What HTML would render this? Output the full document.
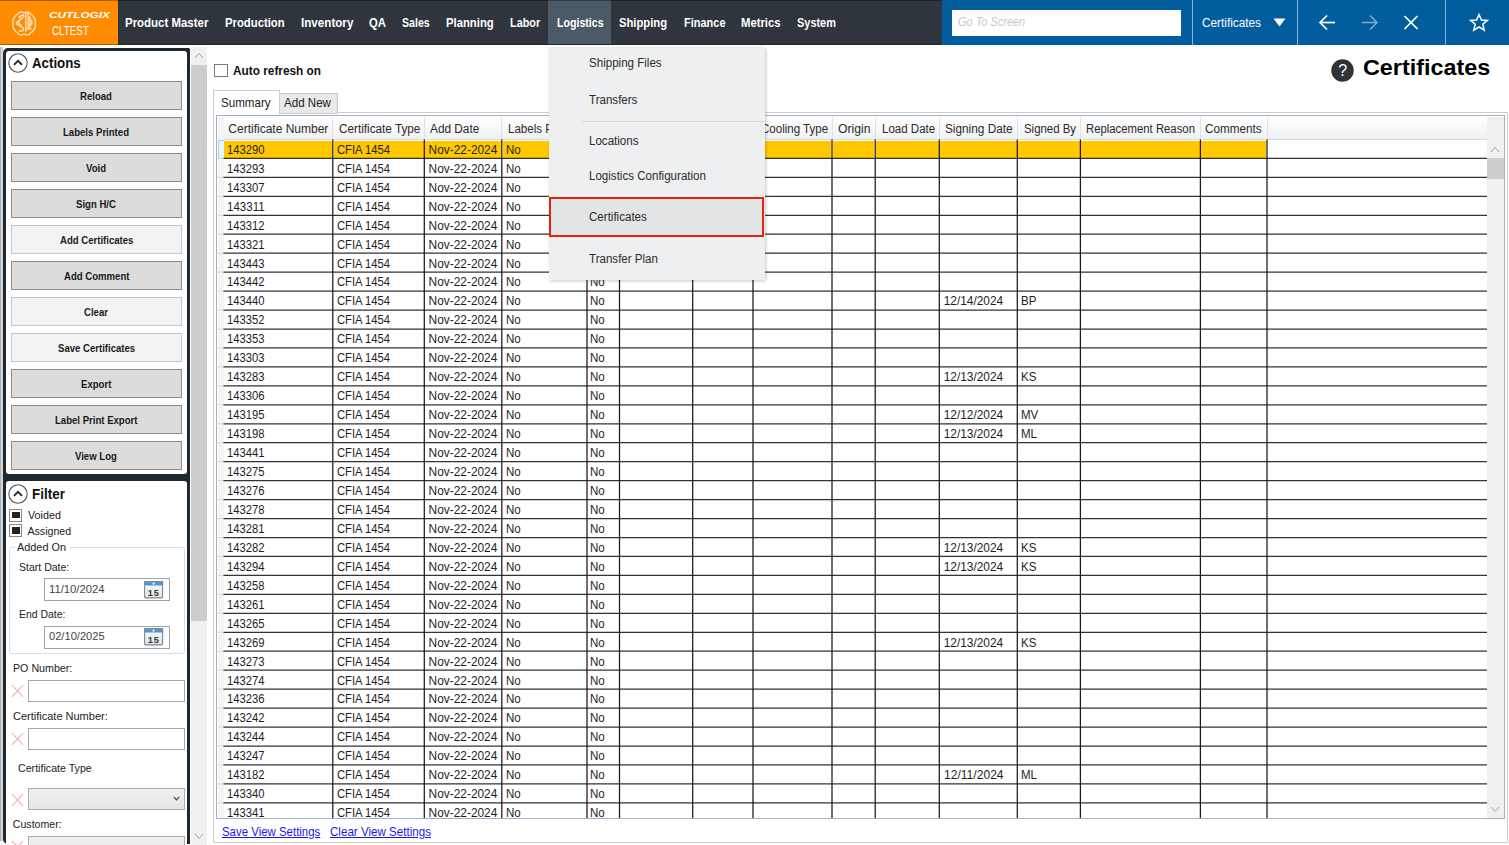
<!DOCTYPE html><html><head><meta charset='utf-8'><style>
*{box-sizing:border-box;margin:0;padding:0}
html,body{width:1509px;height:845px;overflow:hidden;background:#fff;font-family:"Liberation Sans", sans-serif;color:#222}
.a{position:absolute}
.t{position:absolute;white-space:nowrap;line-height:1;transform-origin:0 0}
.btn{position:absolute;left:10.5px;width:171.5px;height:29.5px;background:#dcdcdc;border:1px solid #8c8c8c}
.btn.l{background:#f3f3f3;border-color:#c3c6ca}
</style></head><body>
<div class="a" style="left:0;top:0;width:1509px;height:45px;background:#2e353c"></div>
<div class="a" style="left:0;top:0;width:118px;height:45px;background:#ff8c00"></div>
<div class="a" style="left:548px;top:0;width:63px;height:44px;background:#4a5a66"></div>
<div class="a" style="left:942px;top:0;width:567px;height:45px;background:#015d9e"></div>
<div class="a" style="left:0;top:0;width:942px;height:1px;background:rgba(0,0,0,0.33)"></div>
<div class="a" style="left:0;top:44px;width:942px;height:1px;background:rgba(0,0,0,0.3)"></div>
<svg class="a" style="left:10px;top:10px" width="28" height="27" viewBox="0 0 28 27">
<g fill="none" stroke="#ffd9ad" stroke-linejoin="round" stroke-linecap="round" stroke-width="1.5">
<path d="M9 2.6 Q11.5 1.4 14 2.8 Q16.8 1.4 19.3 2.6 L21 4.5 Q23.2 4.8 23.6 7 L25.3 9.5 V17.5 L23.6 20 Q23.2 22.2 21 22.5 L19.3 24.4 Q16.8 25.6 14 24.2 Q11.5 25.6 9 24.4 L7.3 22.5 Q5.1 22.2 4.7 20 L3 17.5 V9.5 L4.7 7 Q5.1 4.8 7.3 4.5 Z"/>
<path d="M9.3 7 Q11 5.2 13.2 4.8 M13.2 4.8 L14 6.5 L6.6 12.3 L6.6 14.2 L13.4 17.8 L13.4 20.2 Q11.6 21.8 9.6 20.8"/>
<path d="M11.6 8.5 L8.8 11 L8.8 13.6 L11.6 15.6"/>
<path d="M15.8 3.4 V21.4 M18.2 3.4 V19"/>
<path d="M19.8 7.5 V18.8 H21.2 M21.8 10 V14.5 H20.8"/>
</g>
<g fill="#ffe6c8"><circle cx="9.4" cy="7" r="1"/><circle cx="9.6" cy="20.6" r="1"/><circle cx="17" cy="2.9" r="1"/><circle cx="19.8" cy="7.4" r="0.9"/><circle cx="18.4" cy="19" r="0.9"/></g>
</svg>
<div class="t" style="left:49.20px;top:10px;font-size:9.5px;color:#fff;font-weight:bold;font-style:italic;transform:scaleX(1.239);">CUTLOGIX</div>
<div class="t" style="left:52.40px;top:24px;font-size:13px;color:#fff;transform:scaleX(0.755);">CLTEST</div>
<div class="t" style="left:125.30px;top:17px;font-size:12.8px;color:#fff;font-weight:bold;transform:scaleX(0.895);">Product Master</div>
<div class="t" style="left:225.10px;top:17px;font-size:12.8px;color:#fff;font-weight:bold;transform:scaleX(0.883);">Production</div>
<div class="t" style="left:300.80px;top:17px;font-size:12.8px;color:#fff;font-weight:bold;transform:scaleX(0.909);">Inventory</div>
<div class="t" style="left:369.10px;top:17px;font-size:12.8px;color:#fff;font-weight:bold;transform:scaleX(0.883);">QA</div>
<div class="t" style="left:402.10px;top:17px;font-size:12.8px;color:#fff;font-weight:bold;transform:scaleX(0.830);">Sales</div>
<div class="t" style="left:445.70px;top:17px;font-size:12.8px;color:#fff;font-weight:bold;transform:scaleX(0.883);">Planning</div>
<div class="t" style="left:509.70px;top:17px;font-size:12.8px;color:#fff;font-weight:bold;transform:scaleX(0.848);">Labor</div>
<div class="t" style="left:556.60px;top:17px;font-size:12.8px;color:#fff;font-weight:bold;transform:scaleX(0.830);">Logistics</div>
<div class="t" style="left:619.10px;top:17px;font-size:12.8px;color:#fff;font-weight:bold;transform:scaleX(0.879);">Shipping</div>
<div class="t" style="left:683.90px;top:17px;font-size:12.8px;color:#fff;font-weight:bold;transform:scaleX(0.858);">Finance</div>
<div class="t" style="left:741.40px;top:17px;font-size:12.8px;color:#fff;font-weight:bold;transform:scaleX(0.883);">Metrics</div>
<div class="t" style="left:797.10px;top:17px;font-size:12.8px;color:#fff;font-weight:bold;transform:scaleX(0.855);">System</div>
<div class="a" style="left:952px;top:10px;width:229px;height:25.5px;background:#fff"></div>
<div class="t" style="left:957.70px;top:16px;font-size:12.3px;color:#c8c8c8;font-style:italic;transform:scaleX(0.891);">Go To Screen</div>
<div class="a" style="left:1192px;top:0;width:1px;height:45px;background:#8fb3d3"></div>
<div class="a" style="left:1297px;top:0;width:1px;height:45px;background:#8fb3d3"></div>
<div class="a" style="left:1445px;top:0;width:1px;height:45px;background:#8fb3d3"></div>
<div class="t" style="left:1201.80px;top:17px;font-size:12.3px;color:#fff;transform:scaleX(0.959);">Certificates</div>
<svg class="a" style="left:1273px;top:18px" width="13" height="9" viewBox="0 0 13 9"><path d="M0.5 0.5 H12.5 L6.5 8.5 Z" fill="#fff"/></svg>
<svg class="a" style="left:1318px;top:14px" width="20" height="17" viewBox="0 0 20 17"><g fill="none" stroke="#fff" stroke-width="1.7"><path d="M2 8.5 H17"/><path d="M9 1.5 L2 8.5 L9 15.5"/></g></svg>
<svg class="a" style="left:1360px;top:14px" width="20" height="17" viewBox="0 0 20 17"><g fill="none" stroke="#86a9cb" stroke-width="1.5"><path d="M2 8.5 H17"/><path d="M10 1.5 L17 8.5 L10 15.5"/></g></svg>
<svg class="a" style="left:1403px;top:15px" width="16" height="15" viewBox="0 0 16 15"><g fill="none" stroke="#fff" stroke-width="1.7"><path d="M1.5 1 L14.5 14"/><path d="M14.5 1 L1.5 14"/></g></svg>
<svg class="a" style="left:1469px;top:13px" width="20" height="19" viewBox="0 0 20 19"><path d="M10 1.5 L12.4 7 L18.3 7.4 L13.8 11.3 L15.2 17.2 L10 14 L4.8 17.2 L6.2 11.3 L1.7 7.4 L7.6 7 Z" fill="none" stroke="#fff" stroke-width="1.5" stroke-linejoin="miter"/></svg>
<div class="a" style="left:0;top:47px;width:2.8px;height:793.5px;background:linear-gradient(90deg,#aeb2b5 0,#aeb2b5 1.3px,#d6d6d6 1.3px)"></div>
<div class="a" style="left:2.8px;top:47.5px;width:187.6px;height:796px;border-radius:5px 1.5px 0 5px;background:#1e2830"></div>
<div class="a" style="left:5.8px;top:50.6px;width:181.4px;height:423.8px;border-radius:3px;background:#fff"></div>
<div class="a" style="left:5.5px;top:481.1px;width:181.8px;height:380px;border-radius:3px;background:#fff"></div>
<svg class="a" style="left:8px;top:53px" width="20" height="20" viewBox="0 0 20 20"><circle cx="10" cy="10" r="9.2" fill="none" stroke="#555" stroke-width="1.1"/><path d="M6 11.8 L10 7.8 L14 11.8" fill="none" stroke="#222" stroke-width="1.8"/></svg>
<div class="t" style="left:31.70px;top:56px;font-size:14.5px;color:#111;font-weight:bold;transform:scaleX(0.916);">Actions</div>
<div class="btn" style="top:80.5px"></div>
<div class="t" style="left:80.42px;top:92px;font-size:10.2px;color:#1a1a1a;font-weight:bold;transform:scaleX(0.940);">Reload</div>
<div class="btn" style="top:116.5px"></div>
<div class="t" style="left:63.38px;top:128px;font-size:10.2px;color:#1a1a1a;font-weight:bold;transform:scaleX(0.940);">Labels Printed</div>
<div class="btn" style="top:152.5px"></div>
<div class="t" style="left:86.41px;top:164px;font-size:10.2px;color:#1a1a1a;font-weight:bold;transform:scaleX(0.940);">Void</div>
<div class="btn" style="top:188.5px"></div>
<div class="t" style="left:76.43px;top:200px;font-size:10.2px;color:#1a1a1a;font-weight:bold;transform:scaleX(0.940);">Sign H/C</div>
<div class="btn l" style="top:224.5px"></div>
<div class="t" style="left:59.62px;top:236px;font-size:10.2px;color:#1a1a1a;font-weight:bold;transform:scaleX(0.940);">Add Certificates</div>
<div class="btn" style="top:260.5px"></div>
<div class="t" style="left:63.62px;top:272px;font-size:10.2px;color:#1a1a1a;font-weight:bold;transform:scaleX(0.940);">Add Comment</div>
<div class="btn l" style="top:296.5px"></div>
<div class="t" style="left:84.42px;top:308px;font-size:10.2px;color:#1a1a1a;font-weight:bold;transform:scaleX(0.940);">Clear</div>
<div class="btn l" style="top:332.5px"></div>
<div class="t" style="left:57.74px;top:344px;font-size:10.2px;color:#1a1a1a;font-weight:bold;transform:scaleX(0.940);">Save Certificates</div>
<div class="btn" style="top:368.5px"></div>
<div class="t" style="left:81.12px;top:380px;font-size:10.2px;color:#1a1a1a;font-weight:bold;transform:scaleX(0.940);">Export</div>
<div class="btn" style="top:404.5px"></div>
<div class="t" style="left:55.04px;top:416px;font-size:10.2px;color:#1a1a1a;font-weight:bold;transform:scaleX(0.940);">Label Print Export</div>
<div class="btn" style="top:440.5px"></div>
<div class="t" style="left:75.49px;top:452px;font-size:10.2px;color:#1a1a1a;font-weight:bold;transform:scaleX(0.940);">View Log</div>
<svg class="a" style="left:8px;top:483.5px" width="20" height="20" viewBox="0 0 20 20"><circle cx="10" cy="10" r="9.2" fill="none" stroke="#555" stroke-width="1.1"/><path d="M6 11.8 L10 7.8 L14 11.8" fill="none" stroke="#222" stroke-width="1.8"/></svg>
<div class="t" style="left:32.00px;top:487px;font-size:14.5px;color:#111;font-weight:bold;transform:scaleX(0.930);">Filter</div>
<div class="a" style="left:8.8px;top:509px;width:13.5px;height:12.5px;border:1px solid #888;background:#fff"></div>
<div class="a" style="left:11.5px;top:511.8px;width:8px;height:6.7px;background:#222"></div>
<div class="t" style="left:27.50px;top:510px;font-size:10.6px;color:#222;transform:scaleX(1.015);">Voided</div>
<div class="a" style="left:8.8px;top:524.3px;width:13.5px;height:12.5px;border:1px solid #888;background:#fff"></div>
<div class="a" style="left:11.5px;top:527.0999999999999px;width:8px;height:6.7px;background:#222"></div>
<div class="t" style="left:27.50px;top:526px;font-size:10.6px;color:#222;">Assigned</div>
<div class="a" style="left:9px;top:547px;width:175.5px;height:106.5px;border:1px solid #d5dde5;border-radius:3px"></div>
<div class="a" style="left:15px;top:542px;width:55px;height:10px;background:#fff"></div>
<div class="t" style="left:16.60px;top:542px;font-size:10.6px;color:#222;transform:scaleX(1.026);">Added On</div>
<div class="t" style="left:18.50px;top:562px;font-size:10.6px;color:#222;transform:scaleX(0.993);">Start Date:</div>
<div class="t" style="left:18.50px;top:609px;font-size:10.6px;color:#222;transform:scaleX(0.986);">End Date:</div>
<div class="a" style="left:43.5px;top:578px;width:126px;height:23px;border:1px solid #98a6b3;background:#fff"></div>
<div class="t" style="left:49.20px;top:584px;font-size:10.8px;color:#444;transform:scaleX(1.044);">11/10/2024</div>
<svg class="a" style="left:143.6px;top:580.8000000000001px" width="20" height="18" viewBox="0 0 20 18"><defs><linearGradient id="cg" x1="0" y1="0" x2="0" y2="1"><stop offset="0" stop-color="#fdfdfd"/><stop offset="1" stop-color="#dfe2e5"/></linearGradient></defs><path d="M0.6 0.6 H18.6 V15.6 Q18.6 16.9 17.3 16.9 H1.9 Q0.6 16.9 0.6 15.6 Z" fill="url(#cg)" stroke="#858585" stroke-width="1.1"/><rect x="1.1" y="1.1" width="17" height="3.4" fill="#4f93d6"/><circle cx="9.6" cy="2.6" r="1.1" fill="#fff"/><text x="9.7" y="14.6" font-family="Liberation Sans" font-weight="bold" font-size="9.2" letter-spacing="0.9" text-anchor="middle" fill="#3a3a3a">15</text></svg>
<div class="a" style="left:43.5px;top:626px;width:126px;height:23px;border:1px solid #98a6b3;background:#fff"></div>
<div class="t" style="left:49.20px;top:631px;font-size:10.8px;color:#444;transform:scaleX(1.030);">02/10/2025</div>
<svg class="a" style="left:143.6px;top:628.4px" width="20" height="18" viewBox="0 0 20 18"><defs><linearGradient id="cg" x1="0" y1="0" x2="0" y2="1"><stop offset="0" stop-color="#fdfdfd"/><stop offset="1" stop-color="#dfe2e5"/></linearGradient></defs><path d="M0.6 0.6 H18.6 V15.6 Q18.6 16.9 17.3 16.9 H1.9 Q0.6 16.9 0.6 15.6 Z" fill="url(#cg)" stroke="#858585" stroke-width="1.1"/><rect x="1.1" y="1.1" width="17" height="3.4" fill="#4f93d6"/><circle cx="9.6" cy="2.6" r="1.1" fill="#fff"/><text x="9.7" y="14.6" font-family="Liberation Sans" font-weight="bold" font-size="9.2" letter-spacing="0.9" text-anchor="middle" fill="#3a3a3a">15</text></svg>
<div class="t" style="left:12.80px;top:663px;font-size:10.6px;color:#222;transform:scaleX(1.007);">PO Number:</div>
<svg class="a" style="left:10.5px;top:684px" width="13" height="14" viewBox="0 0 13 14"><g stroke="#f8bdb7" stroke-width="1.3"><path d="M1 1 L12 13"/><path d="M12 1 L1 13"/></g></svg>
<div class="a" style="left:27.8px;top:680px;width:157.5px;height:22px;border:1px solid #a6a6a6;background:#fff"></div>
<div class="t" style="left:12.80px;top:711px;font-size:10.6px;color:#222;transform:scaleX(1.038);">Certificate Number:</div>
<svg class="a" style="left:10.5px;top:731.5px" width="13" height="14" viewBox="0 0 13 14"><g stroke="#f8bdb7" stroke-width="1.3"><path d="M1 1 L12 13"/><path d="M12 1 L1 13"/></g></svg>
<div class="a" style="left:27.8px;top:727.5px;width:157.5px;height:22px;border:1px solid #a6a6a6;background:#fff"></div>
<div class="t" style="left:17.80px;top:763px;font-size:10.6px;color:#222;transform:scaleX(1.005);">Certificate Type</div>
<svg class="a" style="left:10.5px;top:792.5px" width="13" height="14" viewBox="0 0 13 14"><g stroke="#f8bdb7" stroke-width="1.3"><path d="M1 1 L12 13"/><path d="M12 1 L1 13"/></g></svg>
<div class="a" style="left:27.8px;top:787.5px;width:157.5px;height:22.5px;border:1px solid #acacac;background:linear-gradient(#f0f0f0,#e5e5e5)"></div>
<svg class="a" style="left:172.5px;top:796px" width="7" height="5" viewBox="0 0 7 5"><path d="M0.7 0.8 L3.5 3.8 L6.3 0.8" fill="none" stroke="#444" stroke-width="1.2"/></svg>
<div class="t" style="left:12.80px;top:819px;font-size:10.6px;color:#222;">Customer:</div>
<svg class="a" style="left:10.5px;top:840px" width="13" height="14" viewBox="0 0 13 14"><g stroke="#f8bdb7" stroke-width="1.3"><path d="M1 1 L12 13"/><path d="M12 1 L1 13"/></g></svg>
<div class="a" style="left:27.8px;top:835.5px;width:157.5px;height:22.5px;border:1px solid #acacac;background:linear-gradient(#f0f0f0,#e5e5e5)"></div>
<div class="a" style="left:190.5px;top:47px;width:16.5px;height:798px;background:#f0f0f0"></div>
<div class="a" style="left:190.5px;top:64.5px;width:16.5px;height:556.5px;background:#cdcdcd"></div>
<svg class="a" style="left:194px;top:52px" width="10" height="7" viewBox="0 0 10 7"><path d="M1 6 L5 1.5 L9 6" fill="none" stroke="#a0a0a0" stroke-width="1"/></svg>
<svg class="a" style="left:194px;top:833px" width="10" height="7" viewBox="0 0 10 7"><path d="M1 1 L5 5.5 L9 1" fill="none" stroke="#a0a0a0" stroke-width="1"/></svg>
<div class="a" style="left:214px;top:63.5px;width:14px;height:13px;border:1px solid #7a7a7a;background:#fff"></div>
<div class="t" style="left:233.30px;top:65px;font-size:12.2px;color:#111;font-weight:bold;transform:scaleX(0.970);">Auto refresh on</div>
<svg class="a" style="left:1331px;top:58.5px" width="23" height="23" viewBox="0 0 23 23"><circle cx="11.5" cy="11.5" r="11.2" fill="#2f3439"/><text x="11.6" y="17.3" font-family="Liberation Sans" font-size="16" text-anchor="middle" fill="#fff">?</text></svg>
<div class="t" style="left:1362.70px;top:57px;font-size:21.8px;color:#000;font-weight:bold;transform:scaleX(1.072);">Certificates</div>
<div class="a" style="left:213px;top:112px;width:1295px;height:731px;border:1px solid #cdcdcd;background:#fff"></div>
<div class="a" style="left:279px;top:92.5px;width:59px;height:21px;border:1px solid #c9c9c9;background:#e9e9e9"></div>
<div class="a" style="left:213px;top:90px;width:66.5px;height:23px;border:1px solid #cdcdcd;border-bottom:none;background:#fff"></div>
<div class="t" style="left:221.20px;top:97px;font-size:12.2px;color:#222;transform:scaleX(0.950);">Summary</div>
<div class="t" style="left:283.50px;top:97px;font-size:12.2px;color:#222;transform:scaleX(0.950);">Add New</div>
<div class="a" style="left:216px;top:115px;width:1289px;height:704px;border:1px solid #9db1c9;background:#fff"></div>
<div class="a" style="left:217.5px;top:116.5px;width:1269px;height:23px;background:linear-gradient(#ffffff,#f0f1f3);border-bottom:1px solid #d9d9d9"></div>
<div class="a" style="left:217.5px;top:116.5px;width:6px;height:701px;background:#f4f4f4"></div>
<div class="a" style="left:332.3px;top:117px;width:1px;height:22px;background:#e2e2e2"></div>
<div class="a" style="left:423.8px;top:117px;width:1px;height:22px;background:#e2e2e2"></div>
<div class="a" style="left:501.3px;top:117px;width:1px;height:22px;background:#e2e2e2"></div>
<div class="a" style="left:586.5px;top:117px;width:1px;height:22px;background:#e2e2e2"></div>
<div class="a" style="left:619.0px;top:117px;width:1px;height:22px;background:#e2e2e2"></div>
<div class="a" style="left:692.2px;top:117px;width:1px;height:22px;background:#e2e2e2"></div>
<div class="a" style="left:752.5px;top:117px;width:1px;height:22px;background:#e2e2e2"></div>
<div class="a" style="left:831.5px;top:117px;width:1px;height:22px;background:#e2e2e2"></div>
<div class="a" style="left:874.7px;top:117px;width:1px;height:22px;background:#e2e2e2"></div>
<div class="a" style="left:938.8px;top:117px;width:1px;height:22px;background:#e2e2e2"></div>
<div class="a" style="left:1016.8px;top:117px;width:1px;height:22px;background:#e2e2e2"></div>
<div class="a" style="left:1079.9px;top:117px;width:1px;height:22px;background:#e2e2e2"></div>
<div class="a" style="left:1199.9px;top:117px;width:1px;height:22px;background:#e2e2e2"></div>
<div class="a" style="left:1266.5px;top:117px;width:1px;height:22px;background:#e2e2e2"></div>
<div class="t" style="left:228.30px;top:123px;font-size:12px;color:#2a2a2a;">Certificate Number</div>
<div class="t" style="left:338.70px;top:123px;font-size:12px;color:#2a2a2a;transform:scaleX(0.978);">Certificate Type</div>
<div class="t" style="left:430.30px;top:123px;font-size:12px;color:#2a2a2a;transform:scaleX(0.984);">Add Date</div>
<div class="t" style="left:507.70px;top:123px;font-size:12px;color:#2a2a2a;transform:scaleX(0.960);">Labels Printed</div>
<div class="t" style="left:760.87px;top:123px;font-size:12px;color:#2a2a2a;transform:scaleX(0.961);">Cooling Type</div>
<div class="t" style="left:838.10px;top:123px;font-size:12px;color:#2a2a2a;transform:scaleX(1.019);">Origin</div>
<div class="t" style="left:881.60px;top:123px;font-size:12px;color:#2a2a2a;transform:scaleX(0.960);">Load Date</div>
<div class="t" style="left:945.20px;top:123px;font-size:12px;color:#2a2a2a;transform:scaleX(0.983);">Signing Date</div>
<div class="t" style="left:1023.50px;top:123px;font-size:12px;color:#2a2a2a;transform:scaleX(0.950);">Signed By</div>
<div class="t" style="left:1085.90px;top:123px;font-size:12px;color:#2a2a2a;transform:scaleX(0.944);">Replacement Reason</div>
<div class="t" style="left:1205.40px;top:123px;font-size:12px;color:#2a2a2a;transform:scaleX(0.976);">Comments</div>
<div class="a" style="left:224.2px;top:141px;width:107.9px;height:16.8px;background:#ffc800"></div>
<div class="a" style="left:333.5px;top:141px;width:90.1px;height:16.8px;background:#ffc800"></div>
<div class="a" style="left:425.0px;top:141px;width:76.1px;height:16.8px;background:#ffc800"></div>
<div class="a" style="left:502.5px;top:141px;width:83.79999999999998px;height:16.8px;background:#ffc800"></div>
<div class="a" style="left:587.7px;top:141px;width:31.1px;height:16.8px;background:#ffc800"></div>
<div class="a" style="left:620.2px;top:141px;width:71.80000000000004px;height:16.8px;background:#ffc800"></div>
<div class="a" style="left:693.4000000000001px;top:141px;width:58.899999999999956px;height:16.8px;background:#ffc800"></div>
<div class="a" style="left:753.7px;top:141px;width:77.6px;height:16.8px;background:#ffc800"></div>
<div class="a" style="left:832.7px;top:141px;width:41.80000000000005px;height:16.8px;background:#ffc800"></div>
<div class="a" style="left:875.9000000000001px;top:141px;width:62.69999999999991px;height:16.8px;background:#ffc800"></div>
<div class="a" style="left:940.0px;top:141px;width:76.6px;height:16.8px;background:#ffc800"></div>
<div class="a" style="left:1018.0px;top:141px;width:61.70000000000014px;height:16.8px;background:#ffc800"></div>
<div class="a" style="left:1081.1000000000001px;top:141px;width:118.6px;height:16.8px;background:#ffc800"></div>
<div class="a" style="left:1201.1000000000001px;top:141px;width:65.1999999999999px;height:16.8px;background:#ffc800"></div>
<div class="a" style="left:217.5px;top:140px;width:6px;height:18.5px;border:1px solid #9fd3f5;border-right:none;background:#e8f4fc"></div>
<div class="t" style="left:226.80px;top:145px;font-size:11.9px;color:#1e1e1e;transform:scaleX(0.946);">143290</div>
<div class="t" style="left:336.50px;top:145px;font-size:11.9px;color:#1e1e1e;transform:scaleX(0.942);">CFIA 1454</div>
<div class="t" style="left:428.60px;top:145px;font-size:11.9px;color:#1e1e1e;">Nov-22-2024</div>
<div class="t" style="left:506.00px;top:145px;font-size:11.9px;color:#1e1e1e;transform:scaleX(0.970);">No</div>
<div class="t" style="left:590.30px;top:145px;font-size:11.9px;color:#1e1e1e;transform:scaleX(0.970);">No</div>
<div class="t" style="left:226.80px;top:164px;font-size:11.9px;color:#1e1e1e;transform:scaleX(0.946);">143293</div>
<div class="t" style="left:336.50px;top:164px;font-size:11.9px;color:#1e1e1e;transform:scaleX(0.942);">CFIA 1454</div>
<div class="t" style="left:428.60px;top:164px;font-size:11.9px;color:#1e1e1e;">Nov-22-2024</div>
<div class="t" style="left:506.00px;top:164px;font-size:11.9px;color:#1e1e1e;transform:scaleX(0.970);">No</div>
<div class="t" style="left:590.30px;top:164px;font-size:11.9px;color:#1e1e1e;transform:scaleX(0.970);">No</div>
<div class="t" style="left:226.80px;top:183px;font-size:11.9px;color:#1e1e1e;transform:scaleX(0.946);">143307</div>
<div class="t" style="left:336.50px;top:183px;font-size:11.9px;color:#1e1e1e;transform:scaleX(0.942);">CFIA 1454</div>
<div class="t" style="left:428.60px;top:183px;font-size:11.9px;color:#1e1e1e;">Nov-22-2024</div>
<div class="t" style="left:506.00px;top:183px;font-size:11.9px;color:#1e1e1e;transform:scaleX(0.970);">No</div>
<div class="t" style="left:590.30px;top:183px;font-size:11.9px;color:#1e1e1e;transform:scaleX(0.970);">No</div>
<div class="t" style="left:226.80px;top:202px;font-size:11.9px;color:#1e1e1e;transform:scaleX(0.970);">143311</div>
<div class="t" style="left:336.50px;top:202px;font-size:11.9px;color:#1e1e1e;transform:scaleX(0.942);">CFIA 1454</div>
<div class="t" style="left:428.60px;top:202px;font-size:11.9px;color:#1e1e1e;">Nov-22-2024</div>
<div class="t" style="left:506.00px;top:202px;font-size:11.9px;color:#1e1e1e;transform:scaleX(0.970);">No</div>
<div class="t" style="left:590.30px;top:202px;font-size:11.9px;color:#1e1e1e;transform:scaleX(0.970);">No</div>
<div class="t" style="left:226.80px;top:221px;font-size:11.9px;color:#1e1e1e;transform:scaleX(0.946);">143312</div>
<div class="t" style="left:336.50px;top:221px;font-size:11.9px;color:#1e1e1e;transform:scaleX(0.942);">CFIA 1454</div>
<div class="t" style="left:428.60px;top:221px;font-size:11.9px;color:#1e1e1e;">Nov-22-2024</div>
<div class="t" style="left:506.00px;top:221px;font-size:11.9px;color:#1e1e1e;transform:scaleX(0.970);">No</div>
<div class="t" style="left:590.30px;top:221px;font-size:11.9px;color:#1e1e1e;transform:scaleX(0.970);">No</div>
<div class="t" style="left:226.80px;top:240px;font-size:11.9px;color:#1e1e1e;transform:scaleX(0.946);">143321</div>
<div class="t" style="left:336.50px;top:240px;font-size:11.9px;color:#1e1e1e;transform:scaleX(0.942);">CFIA 1454</div>
<div class="t" style="left:428.60px;top:240px;font-size:11.9px;color:#1e1e1e;">Nov-22-2024</div>
<div class="t" style="left:506.00px;top:240px;font-size:11.9px;color:#1e1e1e;transform:scaleX(0.970);">No</div>
<div class="t" style="left:590.30px;top:240px;font-size:11.9px;color:#1e1e1e;transform:scaleX(0.970);">No</div>
<div class="t" style="left:226.80px;top:259px;font-size:11.9px;color:#1e1e1e;transform:scaleX(0.946);">143443</div>
<div class="t" style="left:336.50px;top:259px;font-size:11.9px;color:#1e1e1e;transform:scaleX(0.942);">CFIA 1454</div>
<div class="t" style="left:428.60px;top:259px;font-size:11.9px;color:#1e1e1e;">Nov-22-2024</div>
<div class="t" style="left:506.00px;top:259px;font-size:11.9px;color:#1e1e1e;transform:scaleX(0.970);">No</div>
<div class="t" style="left:590.30px;top:259px;font-size:11.9px;color:#1e1e1e;transform:scaleX(0.970);">No</div>
<div class="t" style="left:226.80px;top:277px;font-size:11.9px;color:#1e1e1e;transform:scaleX(0.946);">143442</div>
<div class="t" style="left:336.50px;top:277px;font-size:11.9px;color:#1e1e1e;transform:scaleX(0.942);">CFIA 1454</div>
<div class="t" style="left:428.60px;top:277px;font-size:11.9px;color:#1e1e1e;">Nov-22-2024</div>
<div class="t" style="left:506.00px;top:277px;font-size:11.9px;color:#1e1e1e;transform:scaleX(0.970);">No</div>
<div class="t" style="left:590.30px;top:277px;font-size:11.9px;color:#1e1e1e;transform:scaleX(0.970);">No</div>
<div class="t" style="left:226.80px;top:296px;font-size:11.9px;color:#1e1e1e;transform:scaleX(0.946);">143440</div>
<div class="t" style="left:336.50px;top:296px;font-size:11.9px;color:#1e1e1e;transform:scaleX(0.942);">CFIA 1454</div>
<div class="t" style="left:428.60px;top:296px;font-size:11.9px;color:#1e1e1e;">Nov-22-2024</div>
<div class="t" style="left:506.00px;top:296px;font-size:11.9px;color:#1e1e1e;transform:scaleX(0.970);">No</div>
<div class="t" style="left:590.30px;top:296px;font-size:11.9px;color:#1e1e1e;transform:scaleX(0.970);">No</div>
<div class="t" style="left:943.70px;top:296px;font-size:11.9px;color:#1e1e1e;">12/14/2024</div>
<div class="t" style="left:1020.60px;top:296px;font-size:11.9px;color:#1e1e1e;transform:scaleX(0.970);">BP</div>
<div class="t" style="left:226.80px;top:315px;font-size:11.9px;color:#1e1e1e;transform:scaleX(0.946);">143352</div>
<div class="t" style="left:336.50px;top:315px;font-size:11.9px;color:#1e1e1e;transform:scaleX(0.942);">CFIA 1454</div>
<div class="t" style="left:428.60px;top:315px;font-size:11.9px;color:#1e1e1e;">Nov-22-2024</div>
<div class="t" style="left:506.00px;top:315px;font-size:11.9px;color:#1e1e1e;transform:scaleX(0.970);">No</div>
<div class="t" style="left:590.30px;top:315px;font-size:11.9px;color:#1e1e1e;transform:scaleX(0.970);">No</div>
<div class="t" style="left:226.80px;top:334px;font-size:11.9px;color:#1e1e1e;transform:scaleX(0.946);">143353</div>
<div class="t" style="left:336.50px;top:334px;font-size:11.9px;color:#1e1e1e;transform:scaleX(0.942);">CFIA 1454</div>
<div class="t" style="left:428.60px;top:334px;font-size:11.9px;color:#1e1e1e;">Nov-22-2024</div>
<div class="t" style="left:506.00px;top:334px;font-size:11.9px;color:#1e1e1e;transform:scaleX(0.970);">No</div>
<div class="t" style="left:590.30px;top:334px;font-size:11.9px;color:#1e1e1e;transform:scaleX(0.970);">No</div>
<div class="t" style="left:226.80px;top:353px;font-size:11.9px;color:#1e1e1e;transform:scaleX(0.946);">143303</div>
<div class="t" style="left:336.50px;top:353px;font-size:11.9px;color:#1e1e1e;transform:scaleX(0.942);">CFIA 1454</div>
<div class="t" style="left:428.60px;top:353px;font-size:11.9px;color:#1e1e1e;">Nov-22-2024</div>
<div class="t" style="left:506.00px;top:353px;font-size:11.9px;color:#1e1e1e;transform:scaleX(0.970);">No</div>
<div class="t" style="left:590.30px;top:353px;font-size:11.9px;color:#1e1e1e;transform:scaleX(0.970);">No</div>
<div class="t" style="left:226.80px;top:372px;font-size:11.9px;color:#1e1e1e;transform:scaleX(0.946);">143283</div>
<div class="t" style="left:336.50px;top:372px;font-size:11.9px;color:#1e1e1e;transform:scaleX(0.942);">CFIA 1454</div>
<div class="t" style="left:428.60px;top:372px;font-size:11.9px;color:#1e1e1e;">Nov-22-2024</div>
<div class="t" style="left:506.00px;top:372px;font-size:11.9px;color:#1e1e1e;transform:scaleX(0.970);">No</div>
<div class="t" style="left:590.30px;top:372px;font-size:11.9px;color:#1e1e1e;transform:scaleX(0.970);">No</div>
<div class="t" style="left:943.70px;top:372px;font-size:11.9px;color:#1e1e1e;">12/13/2024</div>
<div class="t" style="left:1020.60px;top:372px;font-size:11.9px;color:#1e1e1e;transform:scaleX(0.970);">KS</div>
<div class="t" style="left:226.80px;top:391px;font-size:11.9px;color:#1e1e1e;transform:scaleX(0.946);">143306</div>
<div class="t" style="left:336.50px;top:391px;font-size:11.9px;color:#1e1e1e;transform:scaleX(0.942);">CFIA 1454</div>
<div class="t" style="left:428.60px;top:391px;font-size:11.9px;color:#1e1e1e;">Nov-22-2024</div>
<div class="t" style="left:506.00px;top:391px;font-size:11.9px;color:#1e1e1e;transform:scaleX(0.970);">No</div>
<div class="t" style="left:590.30px;top:391px;font-size:11.9px;color:#1e1e1e;transform:scaleX(0.970);">No</div>
<div class="t" style="left:226.80px;top:410px;font-size:11.9px;color:#1e1e1e;transform:scaleX(0.946);">143195</div>
<div class="t" style="left:336.50px;top:410px;font-size:11.9px;color:#1e1e1e;transform:scaleX(0.942);">CFIA 1454</div>
<div class="t" style="left:428.60px;top:410px;font-size:11.9px;color:#1e1e1e;">Nov-22-2024</div>
<div class="t" style="left:506.00px;top:410px;font-size:11.9px;color:#1e1e1e;transform:scaleX(0.970);">No</div>
<div class="t" style="left:590.30px;top:410px;font-size:11.9px;color:#1e1e1e;transform:scaleX(0.970);">No</div>
<div class="t" style="left:943.70px;top:410px;font-size:11.9px;color:#1e1e1e;">12/12/2024</div>
<div class="t" style="left:1020.60px;top:410px;font-size:11.9px;color:#1e1e1e;transform:scaleX(0.970);">MV</div>
<div class="t" style="left:226.80px;top:429px;font-size:11.9px;color:#1e1e1e;transform:scaleX(0.946);">143198</div>
<div class="t" style="left:336.50px;top:429px;font-size:11.9px;color:#1e1e1e;transform:scaleX(0.942);">CFIA 1454</div>
<div class="t" style="left:428.60px;top:429px;font-size:11.9px;color:#1e1e1e;">Nov-22-2024</div>
<div class="t" style="left:506.00px;top:429px;font-size:11.9px;color:#1e1e1e;transform:scaleX(0.970);">No</div>
<div class="t" style="left:590.30px;top:429px;font-size:11.9px;color:#1e1e1e;transform:scaleX(0.970);">No</div>
<div class="t" style="left:943.70px;top:429px;font-size:11.9px;color:#1e1e1e;">12/13/2024</div>
<div class="t" style="left:1020.60px;top:429px;font-size:11.9px;color:#1e1e1e;transform:scaleX(0.970);">ML</div>
<div class="t" style="left:226.80px;top:448px;font-size:11.9px;color:#1e1e1e;transform:scaleX(0.946);">143441</div>
<div class="t" style="left:336.50px;top:448px;font-size:11.9px;color:#1e1e1e;transform:scaleX(0.942);">CFIA 1454</div>
<div class="t" style="left:428.60px;top:448px;font-size:11.9px;color:#1e1e1e;">Nov-22-2024</div>
<div class="t" style="left:506.00px;top:448px;font-size:11.9px;color:#1e1e1e;transform:scaleX(0.970);">No</div>
<div class="t" style="left:590.30px;top:448px;font-size:11.9px;color:#1e1e1e;transform:scaleX(0.970);">No</div>
<div class="t" style="left:226.80px;top:467px;font-size:11.9px;color:#1e1e1e;transform:scaleX(0.946);">143275</div>
<div class="t" style="left:336.50px;top:467px;font-size:11.9px;color:#1e1e1e;transform:scaleX(0.942);">CFIA 1454</div>
<div class="t" style="left:428.60px;top:467px;font-size:11.9px;color:#1e1e1e;">Nov-22-2024</div>
<div class="t" style="left:506.00px;top:467px;font-size:11.9px;color:#1e1e1e;transform:scaleX(0.970);">No</div>
<div class="t" style="left:590.30px;top:467px;font-size:11.9px;color:#1e1e1e;transform:scaleX(0.970);">No</div>
<div class="t" style="left:226.80px;top:486px;font-size:11.9px;color:#1e1e1e;transform:scaleX(0.946);">143276</div>
<div class="t" style="left:336.50px;top:486px;font-size:11.9px;color:#1e1e1e;transform:scaleX(0.942);">CFIA 1454</div>
<div class="t" style="left:428.60px;top:486px;font-size:11.9px;color:#1e1e1e;">Nov-22-2024</div>
<div class="t" style="left:506.00px;top:486px;font-size:11.9px;color:#1e1e1e;transform:scaleX(0.970);">No</div>
<div class="t" style="left:590.30px;top:486px;font-size:11.9px;color:#1e1e1e;transform:scaleX(0.970);">No</div>
<div class="t" style="left:226.80px;top:505px;font-size:11.9px;color:#1e1e1e;transform:scaleX(0.946);">143278</div>
<div class="t" style="left:336.50px;top:505px;font-size:11.9px;color:#1e1e1e;transform:scaleX(0.942);">CFIA 1454</div>
<div class="t" style="left:428.60px;top:505px;font-size:11.9px;color:#1e1e1e;">Nov-22-2024</div>
<div class="t" style="left:506.00px;top:505px;font-size:11.9px;color:#1e1e1e;transform:scaleX(0.970);">No</div>
<div class="t" style="left:590.30px;top:505px;font-size:11.9px;color:#1e1e1e;transform:scaleX(0.970);">No</div>
<div class="t" style="left:226.80px;top:524px;font-size:11.9px;color:#1e1e1e;transform:scaleX(0.946);">143281</div>
<div class="t" style="left:336.50px;top:524px;font-size:11.9px;color:#1e1e1e;transform:scaleX(0.942);">CFIA 1454</div>
<div class="t" style="left:428.60px;top:524px;font-size:11.9px;color:#1e1e1e;">Nov-22-2024</div>
<div class="t" style="left:506.00px;top:524px;font-size:11.9px;color:#1e1e1e;transform:scaleX(0.970);">No</div>
<div class="t" style="left:590.30px;top:524px;font-size:11.9px;color:#1e1e1e;transform:scaleX(0.970);">No</div>
<div class="t" style="left:226.80px;top:543px;font-size:11.9px;color:#1e1e1e;transform:scaleX(0.946);">143282</div>
<div class="t" style="left:336.50px;top:543px;font-size:11.9px;color:#1e1e1e;transform:scaleX(0.942);">CFIA 1454</div>
<div class="t" style="left:428.60px;top:543px;font-size:11.9px;color:#1e1e1e;">Nov-22-2024</div>
<div class="t" style="left:506.00px;top:543px;font-size:11.9px;color:#1e1e1e;transform:scaleX(0.970);">No</div>
<div class="t" style="left:590.30px;top:543px;font-size:11.9px;color:#1e1e1e;transform:scaleX(0.970);">No</div>
<div class="t" style="left:943.70px;top:543px;font-size:11.9px;color:#1e1e1e;">12/13/2024</div>
<div class="t" style="left:1020.60px;top:543px;font-size:11.9px;color:#1e1e1e;transform:scaleX(0.970);">KS</div>
<div class="t" style="left:226.80px;top:562px;font-size:11.9px;color:#1e1e1e;transform:scaleX(0.946);">143294</div>
<div class="t" style="left:336.50px;top:562px;font-size:11.9px;color:#1e1e1e;transform:scaleX(0.942);">CFIA 1454</div>
<div class="t" style="left:428.60px;top:562px;font-size:11.9px;color:#1e1e1e;">Nov-22-2024</div>
<div class="t" style="left:506.00px;top:562px;font-size:11.9px;color:#1e1e1e;transform:scaleX(0.970);">No</div>
<div class="t" style="left:590.30px;top:562px;font-size:11.9px;color:#1e1e1e;transform:scaleX(0.970);">No</div>
<div class="t" style="left:943.70px;top:562px;font-size:11.9px;color:#1e1e1e;">12/13/2024</div>
<div class="t" style="left:1020.60px;top:562px;font-size:11.9px;color:#1e1e1e;transform:scaleX(0.970);">KS</div>
<div class="t" style="left:226.80px;top:581px;font-size:11.9px;color:#1e1e1e;transform:scaleX(0.946);">143258</div>
<div class="t" style="left:336.50px;top:581px;font-size:11.9px;color:#1e1e1e;transform:scaleX(0.942);">CFIA 1454</div>
<div class="t" style="left:428.60px;top:581px;font-size:11.9px;color:#1e1e1e;">Nov-22-2024</div>
<div class="t" style="left:506.00px;top:581px;font-size:11.9px;color:#1e1e1e;transform:scaleX(0.970);">No</div>
<div class="t" style="left:590.30px;top:581px;font-size:11.9px;color:#1e1e1e;transform:scaleX(0.970);">No</div>
<div class="t" style="left:226.80px;top:600px;font-size:11.9px;color:#1e1e1e;transform:scaleX(0.946);">143261</div>
<div class="t" style="left:336.50px;top:600px;font-size:11.9px;color:#1e1e1e;transform:scaleX(0.942);">CFIA 1454</div>
<div class="t" style="left:428.60px;top:600px;font-size:11.9px;color:#1e1e1e;">Nov-22-2024</div>
<div class="t" style="left:506.00px;top:600px;font-size:11.9px;color:#1e1e1e;transform:scaleX(0.970);">No</div>
<div class="t" style="left:590.30px;top:600px;font-size:11.9px;color:#1e1e1e;transform:scaleX(0.970);">No</div>
<div class="t" style="left:226.80px;top:619px;font-size:11.9px;color:#1e1e1e;transform:scaleX(0.946);">143265</div>
<div class="t" style="left:336.50px;top:619px;font-size:11.9px;color:#1e1e1e;transform:scaleX(0.942);">CFIA 1454</div>
<div class="t" style="left:428.60px;top:619px;font-size:11.9px;color:#1e1e1e;">Nov-22-2024</div>
<div class="t" style="left:506.00px;top:619px;font-size:11.9px;color:#1e1e1e;transform:scaleX(0.970);">No</div>
<div class="t" style="left:590.30px;top:619px;font-size:11.9px;color:#1e1e1e;transform:scaleX(0.970);">No</div>
<div class="t" style="left:226.80px;top:638px;font-size:11.9px;color:#1e1e1e;transform:scaleX(0.946);">143269</div>
<div class="t" style="left:336.50px;top:638px;font-size:11.9px;color:#1e1e1e;transform:scaleX(0.942);">CFIA 1454</div>
<div class="t" style="left:428.60px;top:638px;font-size:11.9px;color:#1e1e1e;">Nov-22-2024</div>
<div class="t" style="left:506.00px;top:638px;font-size:11.9px;color:#1e1e1e;transform:scaleX(0.970);">No</div>
<div class="t" style="left:590.30px;top:638px;font-size:11.9px;color:#1e1e1e;transform:scaleX(0.970);">No</div>
<div class="t" style="left:943.70px;top:638px;font-size:11.9px;color:#1e1e1e;">12/13/2024</div>
<div class="t" style="left:1020.60px;top:638px;font-size:11.9px;color:#1e1e1e;transform:scaleX(0.970);">KS</div>
<div class="t" style="left:226.80px;top:657px;font-size:11.9px;color:#1e1e1e;transform:scaleX(0.946);">143273</div>
<div class="t" style="left:336.50px;top:657px;font-size:11.9px;color:#1e1e1e;transform:scaleX(0.942);">CFIA 1454</div>
<div class="t" style="left:428.60px;top:657px;font-size:11.9px;color:#1e1e1e;">Nov-22-2024</div>
<div class="t" style="left:506.00px;top:657px;font-size:11.9px;color:#1e1e1e;transform:scaleX(0.970);">No</div>
<div class="t" style="left:590.30px;top:657px;font-size:11.9px;color:#1e1e1e;transform:scaleX(0.970);">No</div>
<div class="t" style="left:226.80px;top:676px;font-size:11.9px;color:#1e1e1e;transform:scaleX(0.946);">143274</div>
<div class="t" style="left:336.50px;top:676px;font-size:11.9px;color:#1e1e1e;transform:scaleX(0.942);">CFIA 1454</div>
<div class="t" style="left:428.60px;top:676px;font-size:11.9px;color:#1e1e1e;">Nov-22-2024</div>
<div class="t" style="left:506.00px;top:676px;font-size:11.9px;color:#1e1e1e;transform:scaleX(0.970);">No</div>
<div class="t" style="left:590.30px;top:676px;font-size:11.9px;color:#1e1e1e;transform:scaleX(0.970);">No</div>
<div class="t" style="left:226.80px;top:694px;font-size:11.9px;color:#1e1e1e;transform:scaleX(0.946);">143236</div>
<div class="t" style="left:336.50px;top:694px;font-size:11.9px;color:#1e1e1e;transform:scaleX(0.942);">CFIA 1454</div>
<div class="t" style="left:428.60px;top:694px;font-size:11.9px;color:#1e1e1e;">Nov-22-2024</div>
<div class="t" style="left:506.00px;top:694px;font-size:11.9px;color:#1e1e1e;transform:scaleX(0.970);">No</div>
<div class="t" style="left:590.30px;top:694px;font-size:11.9px;color:#1e1e1e;transform:scaleX(0.970);">No</div>
<div class="t" style="left:226.80px;top:713px;font-size:11.9px;color:#1e1e1e;transform:scaleX(0.946);">143242</div>
<div class="t" style="left:336.50px;top:713px;font-size:11.9px;color:#1e1e1e;transform:scaleX(0.942);">CFIA 1454</div>
<div class="t" style="left:428.60px;top:713px;font-size:11.9px;color:#1e1e1e;">Nov-22-2024</div>
<div class="t" style="left:506.00px;top:713px;font-size:11.9px;color:#1e1e1e;transform:scaleX(0.970);">No</div>
<div class="t" style="left:590.30px;top:713px;font-size:11.9px;color:#1e1e1e;transform:scaleX(0.970);">No</div>
<div class="t" style="left:226.80px;top:732px;font-size:11.9px;color:#1e1e1e;transform:scaleX(0.946);">143244</div>
<div class="t" style="left:336.50px;top:732px;font-size:11.9px;color:#1e1e1e;transform:scaleX(0.942);">CFIA 1454</div>
<div class="t" style="left:428.60px;top:732px;font-size:11.9px;color:#1e1e1e;">Nov-22-2024</div>
<div class="t" style="left:506.00px;top:732px;font-size:11.9px;color:#1e1e1e;transform:scaleX(0.970);">No</div>
<div class="t" style="left:590.30px;top:732px;font-size:11.9px;color:#1e1e1e;transform:scaleX(0.970);">No</div>
<div class="t" style="left:226.80px;top:751px;font-size:11.9px;color:#1e1e1e;transform:scaleX(0.946);">143247</div>
<div class="t" style="left:336.50px;top:751px;font-size:11.9px;color:#1e1e1e;transform:scaleX(0.942);">CFIA 1454</div>
<div class="t" style="left:428.60px;top:751px;font-size:11.9px;color:#1e1e1e;">Nov-22-2024</div>
<div class="t" style="left:506.00px;top:751px;font-size:11.9px;color:#1e1e1e;transform:scaleX(0.970);">No</div>
<div class="t" style="left:590.30px;top:751px;font-size:11.9px;color:#1e1e1e;transform:scaleX(0.970);">No</div>
<div class="t" style="left:226.80px;top:770px;font-size:11.9px;color:#1e1e1e;transform:scaleX(0.946);">143182</div>
<div class="t" style="left:336.50px;top:770px;font-size:11.9px;color:#1e1e1e;transform:scaleX(0.942);">CFIA 1454</div>
<div class="t" style="left:428.60px;top:770px;font-size:11.9px;color:#1e1e1e;">Nov-22-2024</div>
<div class="t" style="left:506.00px;top:770px;font-size:11.9px;color:#1e1e1e;transform:scaleX(0.970);">No</div>
<div class="t" style="left:590.30px;top:770px;font-size:11.9px;color:#1e1e1e;transform:scaleX(0.970);">No</div>
<div class="t" style="left:943.70px;top:770px;font-size:11.9px;color:#1e1e1e;transform:scaleX(1.016);">12/11/2024</div>
<div class="t" style="left:1020.60px;top:770px;font-size:11.9px;color:#1e1e1e;transform:scaleX(0.970);">ML</div>
<div class="t" style="left:226.80px;top:789px;font-size:11.9px;color:#1e1e1e;transform:scaleX(0.946);">143340</div>
<div class="t" style="left:336.50px;top:789px;font-size:11.9px;color:#1e1e1e;transform:scaleX(0.942);">CFIA 1454</div>
<div class="t" style="left:428.60px;top:789px;font-size:11.9px;color:#1e1e1e;">Nov-22-2024</div>
<div class="t" style="left:506.00px;top:789px;font-size:11.9px;color:#1e1e1e;transform:scaleX(0.970);">No</div>
<div class="t" style="left:590.30px;top:789px;font-size:11.9px;color:#1e1e1e;transform:scaleX(0.970);">No</div>
<div class="t" style="left:226.80px;top:808px;font-size:11.9px;color:#1e1e1e;transform:scaleX(0.946);">143341</div>
<div class="t" style="left:336.50px;top:808px;font-size:11.9px;color:#1e1e1e;transform:scaleX(0.942);">CFIA 1454</div>
<div class="t" style="left:428.60px;top:808px;font-size:11.9px;color:#1e1e1e;">Nov-22-2024</div>
<div class="t" style="left:506.00px;top:808px;font-size:11.9px;color:#1e1e1e;transform:scaleX(0.970);">No</div>
<div class="t" style="left:590.30px;top:808px;font-size:11.9px;color:#1e1e1e;transform:scaleX(0.970);">No</div>
<svg class="a" style="left:0;top:0" width="1509" height="845"><path d="M217.5 158.40H223.5M217.5 177.36H223.5M217.5 196.31H223.5M217.5 215.26H223.5M217.5 234.22H223.5M217.5 253.18H223.5M217.5 272.13H223.5M217.5 291.09H223.5M217.5 310.04H223.5M217.5 329.00H223.5M217.5 347.95H223.5M217.5 366.90H223.5M217.5 385.86H223.5M217.5 404.81H223.5M217.5 423.77H223.5M217.5 442.73H223.5M217.5 461.68H223.5M217.5 480.63H223.5M217.5 499.59H223.5M217.5 518.54H223.5M217.5 537.50H223.5M217.5 556.45H223.5M217.5 575.41H223.5M217.5 594.37H223.5M217.5 613.32H223.5M217.5 632.27H223.5M217.5 651.23H223.5M217.5 670.18H223.5M217.5 689.14H223.5M217.5 708.09H223.5M217.5 727.05H223.5M217.5 746.00H223.5M217.5 764.96H223.5M217.5 783.91H223.5M217.5 802.87H223.5" stroke="#d3dae3" stroke-width="1" fill="none"/><path d="M223.5 158.40H1487M223.5 177.36H1487M223.5 196.31H1487M223.5 215.26H1487M223.5 234.22H1487M223.5 253.18H1487M223.5 272.13H1487M223.5 291.09H1487M223.5 310.04H1487M223.5 329.00H1487M223.5 347.95H1487M223.5 366.90H1487M223.5 385.86H1487M223.5 404.81H1487M223.5 423.77H1487M223.5 442.73H1487M223.5 461.68H1487M223.5 480.63H1487M223.5 499.59H1487M223.5 518.54H1487M223.5 537.50H1487M223.5 556.45H1487M223.5 575.41H1487M223.5 594.37H1487M223.5 613.32H1487M223.5 632.27H1487M223.5 651.23H1487M223.5 670.18H1487M223.5 689.14H1487M223.5 708.09H1487M223.5 727.05H1487M223.5 746.00H1487M223.5 764.96H1487M223.5 783.91H1487M223.5 802.87H1487" stroke="#333" stroke-width="1.25" fill="none"/><path d="M332.80 139.6V818M424.30 139.6V818M501.80 139.6V818M587.00 139.6V818M619.50 139.6V818M692.70 139.6V818M753.00 139.6V818M832.00 139.6V818M875.20 139.6V818M939.30 139.6V818M1017.30 139.6V818M1080.40 139.6V818M1200.40 139.6V818M1267.00 139.6V818" stroke="#1a1a1a" stroke-width="1.25" fill="none"/></svg>
<div class="a" style="left:1487px;top:116.5px;width:16.5px;height:701px;background:#f0f0f0"></div>
<div class="a" style="left:1487px;top:157.5px;width:16.5px;height:21.5px;background:#cdcdcd"></div>
<svg class="a" style="left:1490px;top:146px" width="10" height="7" viewBox="0 0 10 7"><path d="M1 6 L5 1.5 L9 6" fill="none" stroke="#a0a0a0" stroke-width="1"/></svg>
<svg class="a" style="left:1490px;top:806px" width="10" height="7" viewBox="0 0 10 7"><path d="M1 1 L5 5.5 L9 1" fill="none" stroke="#a0a0a0" stroke-width="1"/></svg>
<div class="t" style="left:221.50px;top:826px;font-size:12.2px;color:#1a1ae6;transform:scaleX(0.938);text-decoration:underline">Save View Settings</div>
<div class="t" style="left:330.40px;top:826px;font-size:12.2px;color:#1a1ae6;transform:scaleX(0.951);text-decoration:underline">Clear View Settings</div>
<div class="a" style="left:549px;top:47px;width:215.5px;height:233px;background:#eeeff1;box-shadow:1px 1px 3px rgba(0,0,0,0.22)"></div>
<div class="a" style="left:581.5px;top:120.5px;width:183px;height:1px;background:#d6d7d9"></div>
<div class="a" style="left:549.2px;top:196.7px;width:214.8px;height:40.2px;border:2.6px solid #e0240f;background:#e3e4e6"></div>
<div class="t" style="left:588.50px;top:57px;font-size:12.5px;color:#2b2b2b;transform:scaleX(0.925);">Shipping Files</div>
<div class="t" style="left:588.50px;top:94px;font-size:12.5px;color:#2b2b2b;transform:scaleX(0.925);">Transfers</div>
<div class="t" style="left:588.50px;top:135px;font-size:12.5px;color:#2b2b2b;transform:scaleX(0.925);">Locations</div>
<div class="t" style="left:588.50px;top:170px;font-size:12.5px;color:#2b2b2b;transform:scaleX(0.925);">Logistics Configuration</div>
<div class="t" style="left:588.50px;top:211px;font-size:12.5px;color:#2b2b2b;transform:scaleX(0.925);">Certificates</div>
<div class="t" style="left:588.50px;top:253px;font-size:12.5px;color:#2b2b2b;transform:scaleX(0.925);">Transfer Plan</div>
</body></html>
